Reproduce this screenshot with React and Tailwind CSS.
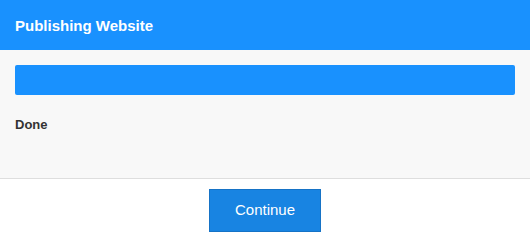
export default function App() {
  return (
    <div className="w-[530px] h-[240px] bg-white flex flex-col" style={{ fontFamily: '"Liberation Sans", Arial, sans-serif' }}>
      <div className="h-[50px] bg-[#1991fe] flex items-center px-[15px]">
        <h1 className="text-white font-bold text-[15px] leading-none">Publishing Website</h1>
      </div>
      <div className="h-[129px] bg-[#f8f8f8] border-b border-[#dedede] px-[15px] pt-[15px] flex flex-col">
        <div className="h-[30px] bg-[#1991fe] rounded-[2px]" />
        <div className="mt-[23px] text-[13px] font-bold text-[#333] leading-none">Done</div>
      </div>
      <div className="flex justify-center pt-[10px]">
        <button className="w-[112px] h-[43px] bg-[#1884e2] border border-[#1673c6] text-white text-[15px]">Continue</button>
      </div>
    </div>
  );
}
